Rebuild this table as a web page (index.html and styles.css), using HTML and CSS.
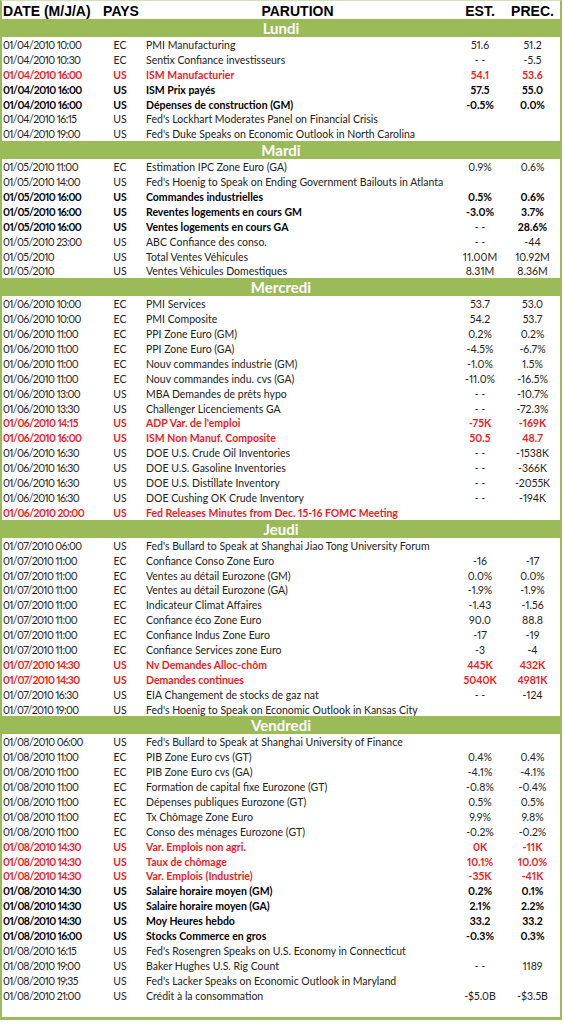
FILE: index.html
```html
<!DOCTYPE html>
<html lang="fr">
<head>
  <meta charset="UTF-8">
  <meta name="viewport" content="width=device-width, initial-scale=1.0">
  <title>Calendrier économique</title>
  <link rel="stylesheet" href="styles.css">
</head>
<body>
  <div class="sheet">
    <div class="head-row">
      <span class="c-date">DATE (M/J/A)</span>
      <span class="c-pays">PAYS</span>
      <span class="c-par">PARUTION</span>
      <span class="c-num">EST.</span>
      <span class="c-num">PREC.</span>
    </div>

    <div class="day">Lundi</div>
    <div class="row"><span>01/04/2010 10:00</span><span>EC</span><span>PMI Manufacturing</span><span>51.6</span><span>51.2</span></div>
    <div class="row"><span>01/04/2010 10:30</span><span>EC</span><span>Sentix Confiance investisseurs</span><span>- -</span><span>-5.5</span></div>
    <div class="row red"><span>01/04/2010 16:00</span><span>US</span><span>ISM Manufacturier</span><span>54.1</span><span>53.6</span></div>
    <div class="row bold"><span>01/04/2010 16:00</span><span>US</span><span>ISM Prix payés</span><span>57.5</span><span>55.0</span></div>
    <div class="row bold"><span>01/04/2010 16:00</span><span>US</span><span>Dépenses de construction (GM)</span><span>-0.5%</span><span>0.0%</span></div>
    <div class="row"><span>01/04/2010 16:15</span><span>US</span><span>Fed's Lockhart Moderates Panel on Financial Crisis</span><span></span><span></span></div>
    <div class="row"><span>01/04/2010 19:00</span><span>US</span><span>Fed's Duke Speaks on Economic Outlook in North Carolina</span><span></span><span></span></div>

    <div class="day">Mardi</div>
    <div class="row"><span>01/05/2010 11:00</span><span>EC</span><span>Estimation IPC Zone Euro (GA)</span><span>0.9%</span><span>0.6%</span></div>
    <div class="row"><span>01/05/2010 14:00</span><span>US</span><span>Fed's Hoenig to Speak on Ending Government Bailouts in Atlanta</span><span></span><span></span></div>
    <div class="row bold"><span>01/05/2010 16:00</span><span>US</span><span>Commandes industrielles</span><span>0.5%</span><span>0.6%</span></div>
    <div class="row bold"><span>01/05/2010 16:00</span><span>US</span><span>Reventes logements en cours GM</span><span>-3.0%</span><span>3.7%</span></div>
    <div class="row bold"><span>01/05/2010 16:00</span><span>US</span><span>Ventes logements en cours GA</span><span class="light">- -</span><span>28.6%</span></div>
    <div class="row"><span>01/05/2010 23:00</span><span>US</span><span>ABC Confiance des conso.</span><span>- -</span><span>-44</span></div>
    <div class="row"><span>01/05/2010</span><span>US</span><span>Total Ventes Véhicules</span><span>11.00M</span><span>10.92M</span></div>
    <div class="row"><span>01/05/2010</span><span>US</span><span>Ventes Véhicules Domestiques</span><span>8.31M</span><span>8.36M</span></div>

    <div class="day">Mercredi</div>
    <div class="row"><span>01/06/2010 10:00</span><span>EC</span><span>PMI Services</span><span>53.7</span><span>53.0</span></div>
    <div class="row"><span>01/06/2010 10:00</span><span>EC</span><span>PMI Composite</span><span>54.2</span><span>53.7</span></div>
    <div class="row"><span>01/06/2010 11:00</span><span>EC</span><span>PPI Zone Euro (GM)</span><span>0.2%</span><span>0.2%</span></div>
    <div class="row"><span>01/06/2010 11:00</span><span>EC</span><span>PPI Zone Euro (GA)</span><span>-4.5%</span><span>-6.7%</span></div>
    <div class="row"><span>01/06/2010 11:00</span><span>EC</span><span>Nouv commandes industrie (GM)</span><span>-1.0%</span><span>1.5%</span></div>
    <div class="row"><span>01/06/2010 11:00</span><span>EC</span><span>Nouv commandes indu. cvs (GA)</span><span>-11.0%</span><span>-16.5%</span></div>
    <div class="row"><span>01/06/2010 13:00</span><span>US</span><span>MBA Demandes de prêts hypo</span><span>- -</span><span>-10.7%</span></div>
    <div class="row"><span>01/06/2010 13:30</span><span>US</span><span>Challenger Licenciements GA</span><span>- -</span><span>-72.3%</span></div>
    <div class="row red"><span>01/06/2010 14:15</span><span>US</span><span>ADP Var. de l'emploi</span><span>-75K</span><span>-169K</span></div>
    <div class="row red"><span>01/06/2010 16:00</span><span>US</span><span>ISM Non Manuf. Composite</span><span>50.5</span><span>48.7</span></div>
    <div class="row"><span>01/06/2010 16:30</span><span>US</span><span>DOE U.S. Crude Oil Inventories</span><span>- -</span><span>-1538K</span></div>
    <div class="row"><span>01/06/2010 16:30</span><span>US</span><span>DOE U.S. Gasoline Inventories</span><span>- -</span><span>-366K</span></div>
    <div class="row"><span>01/06/2010 16:30</span><span>US</span><span>DOE U.S. Distillate Inventory</span><span>- -</span><span>-2055K</span></div>
    <div class="row"><span>01/06/2010 16:30</span><span>US</span><span>DOE Cushing OK Crude Inventory</span><span>- -</span><span>-194K</span></div>
    <div class="row red"><span>01/06/2010 20:00</span><span>US</span><span>Fed Releases Minutes from Dec. 15-16 FOMC Meeting</span><span></span><span></span></div>

    <div class="day">Jeudi</div>
    <div class="row"><span>01/07/2010 06:00</span><span>US</span><span>Fed's Bullard to Speak at Shanghai Jiao Tong University Forum</span><span></span><span></span></div>
    <div class="row"><span>01/07/2010 11:00</span><span>EC</span><span>Confiance Conso Zone Euro</span><span>-16</span><span>-17</span></div>
    <div class="row"><span>01/07/2010 11:00</span><span>EC</span><span>Ventes au détail Eurozone (GM)</span><span>0.0%</span><span>0.0%</span></div>
    <div class="row"><span>01/07/2010 11:00</span><span>EC</span><span>Ventes au détail Eurozone (GA)</span><span>-1.9%</span><span>-1.9%</span></div>
    <div class="row"><span>01/07/2010 11:00</span><span>EC</span><span>Indicateur Climat Affaires</span><span>-1.43</span><span>-1.56</span></div>
    <div class="row"><span>01/07/2010 11:00</span><span>EC</span><span>Confiance éco Zone Euro</span><span>90.0</span><span>88.8</span></div>
    <div class="row"><span>01/07/2010 11:00</span><span>EC</span><span>Confiance Indus Zone Euro</span><span>-17</span><span>-19</span></div>
    <div class="row"><span>01/07/2010 11:00</span><span>EC</span><span>Confiance Services zone Euro</span><span>-3</span><span>-4</span></div>
    <div class="row red"><span>01/07/2010 14:30</span><span>US</span><span>Nv Demandes Alloc-chôm</span><span>445K</span><span>432K</span></div>
    <div class="row red"><span>01/07/2010 14:30</span><span>US</span><span>Demandes continues</span><span>5040K</span><span>4981K</span></div>
    <div class="row"><span>01/07/2010 16:30</span><span>US</span><span>EIA Changement de stocks de gaz nat</span><span>- -</span><span>-124</span></div>
    <div class="row"><span>01/07/2010 19:00</span><span>US</span><span>Fed's Hoenig to Speak on Economic Outlook in Kansas City</span><span></span><span></span></div>

    <div class="day">Vendredi</div>
    <div class="row"><span>01/08/2010 06:00</span><span>US</span><span>Fed's Bullard to Speak at Shanghai University of Finance</span><span></span><span></span></div>
    <div class="row"><span>01/08/2010 11:00</span><span>EC</span><span>PIB Zone Euro cvs (GT)</span><span>0.4%</span><span>0.4%</span></div>
    <div class="row"><span>01/08/2010 11:00</span><span>EC</span><span>PIB Zone Euro cvs (GA)</span><span>-4.1%</span><span>-4.1%</span></div>
    <div class="row"><span>01/08/2010 11:00</span><span>EC</span><span>Formation de capital fixe Eurozone (GT)</span><span>-0.8%</span><span>-0.4%</span></div>
    <div class="row"><span>01/08/2010 11:00</span><span>EC</span><span>Dépenses publiques Eurozone (GT)</span><span>0.5%</span><span>0.5%</span></div>
    <div class="row"><span>01/08/2010 11:00</span><span>EC</span><span>Tx Chômage Zone Euro</span><span>9.9%</span><span>9.8%</span></div>
    <div class="row"><span>01/08/2010 11:00</span><span>EC</span><span>Conso des ménages Eurozone (GT)</span><span>-0.2%</span><span>-0.2%</span></div>
    <div class="row red"><span>01/08/2010 14:30</span><span>US</span><span>Var. Emplois non agri.</span><span>0K</span><span>-11K</span></div>
    <div class="row red"><span>01/08/2010 14:30</span><span>US</span><span>Taux de chômage</span><span>10.1%</span><span>10.0%</span></div>
    <div class="row red"><span>01/08/2010 14:30</span><span>US</span><span>Var. Emplois (Industrie)</span><span>-35K</span><span>-41K</span></div>
    <div class="row bold"><span>01/08/2010 14:30</span><span>US</span><span>Salaire horaire moyen (GM)</span><span>0.2%</span><span>0.1%</span></div>
    <div class="row bold"><span>01/08/2010 14:30</span><span>US</span><span>Salaire horaire moyen (GA)</span><span>2.1%</span><span>2.2%</span></div>
    <div class="row bold"><span>01/08/2010 14:30</span><span>US</span><span>Moy Heures hebdo</span><span>33.2</span><span>33.2</span></div>
    <div class="row bold"><span>01/08/2010 16:00</span><span>US</span><span>Stocks Commerce en gros</span><span>-0.3%</span><span>0.3%</span></div>
    <div class="row"><span>01/08/2010 16:15</span><span>US</span><span>Fed's Rosengren Speaks on U.S. Economy in Connecticut</span><span></span><span></span></div>
    <div class="row"><span>01/08/2010 19:00</span><span>US</span><span>Baker Hughes U.S. Rig Count</span><span>- -</span><span>1189</span></div>
    <div class="row"><span>01/08/2010 19:35</span><span>US</span><span>Fed's Lacker Speaks on Economic Outlook in Maryland</span><span></span><span></span></div>
    <div class="row"><span>01/08/2010 21:00</span><span>US</span><span>Crédit à la consommation</span><span>-$5.0B</span><span>-$3.5B</span></div>
    <div class="row empty"></div>
  </div>
</body>
</html>
```

FILE: styles.css
```css
body {
  margin: 0;
  background: #ffffff;
  font-family: Lato, "Liberation Sans", sans-serif;
  color: #222222;
}

.sheet {
  width: 558px;
  border: 2px solid #9bbb59;
  border-top: 1px solid #d3e2b6;
  border-bottom-width: 3px;
}

.head-row,
.row {
  display: grid;
  grid-template-columns: 98px 40px 315px 50px 55px;
  white-space: nowrap;
}

.head-row {
  height: 18px;
  line-height: 20px;
  font-family: "Liberation Sans", Arial, sans-serif;
  font-weight: bold;
  font-size: 14px;
  color: #000000;
}

.head-row .c-date {
  padding-left: 1px;
}

.head-row .c-pays {
  text-align: center;
  margin-left: 2px;
}

.head-row .c-par,
.head-row .c-num {
  text-align: center;
}

.day {
  height: 18px;
  line-height: 18px;
  background: #9bbb59;
  color: #ffffff;
  font-weight: bold;
  font-size: 15px;
  text-align: center;
}

.row {
  height: 14.9px;
  line-height: 16px;
  font-size: 10.5px;
  font-variant-numeric: proportional-nums;
}

.row span:nth-child(1) {
  padding-left: 1px;
  letter-spacing: -0.6px;
}

.row span:nth-child(2) {
  text-align: center;
}

.row span:nth-child(3) {
  padding-left: 6px;
}

.row span:nth-child(4),
.row span:nth-child(5) {
  text-align: center;
}

.row.bold {
  font-weight: bold;
  color: #000000;
}

.row.red {
  font-weight: bold;
  color: #ee1c25;
}

.row.bold .light {
  font-weight: normal;
}
```
